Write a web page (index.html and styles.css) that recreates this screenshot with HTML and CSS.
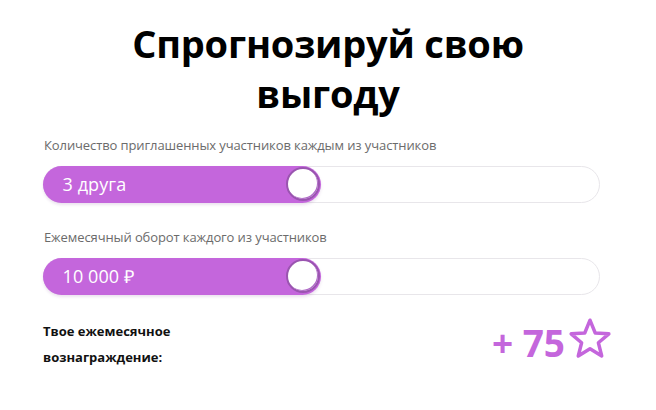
FILE: index.html
```html
<!DOCTYPE html>
<html lang="ru">
<head>
<meta charset="utf-8">
<link rel="stylesheet" href="styles.css">
</head>
<body>
<div class="page">
  <h1 class="title">Спрогнозируй свою<br>выгоду</h1>
  <div class="field">
    <div class="label">Количество приглашенных участников каждым из участников</div>
    <div class="track">
      <div class="fill" style="width: 278px;">
        <span class="value">3 друга</span>
        <span class="knob"></span>
      </div>
    </div>
  </div>
  <div class="field">
    <div class="label">Ежемесячный оборот каждого из участников</div>
    <div class="track">
      <div class="fill" style="width: 278px;">
        <span class="value">10 000 ₽</span>
        <span class="knob"></span>
      </div>
    </div>
  </div>
  <div class="result">
    <div class="result-label">Твое ежемесячное<br>вознаграждение:</div>
    <div class="reward">
      <span class="reward-num">+ 75</span>
      <svg class="star" width="44" height="42" viewBox="0 0 42 40">
        <path d="M21 3 L26 15.2 L39 16 L29 24.5 L32.2 37.2 L21 30.2 L9.8 37.2 L13 24.5 L3 16 L16 15.2 Z" fill="none" stroke="#c466dc" stroke-width="3.3" stroke-linejoin="round"/>
      </svg>
    </div>
  </div>
</div>
</body>
</html>
```

FILE: styles.css
```css
* { box-sizing: border-box; }
html, body { margin: 0; padding: 0; background: #fff; }
body { font-family: "Open Sans", "Noto Sans", sans-serif; }
.page {
  width: 656px;
  height: 410px;
  padding: 18px 56px 0 43px;
}
.title {
  margin: 0 0 0 13px;
  font-size: 38px;
  line-height: 50px;
  font-weight: 700;
  text-align: center;
  color: #000;
  letter-spacing: -0.2px;
}
.field { margin-top: 18px; }
.field + .field { margin-top: 25px; }
.label {
  font-size: 13px;
  line-height: 18px;
  color: #6b6b6b;
  margin-left: 1px;
  letter-spacing: -0.1px;
}
.track {
  margin-top: 12px;
  width: 557px;
  height: 37px;
  border: 1.5px solid #e8e6ea;
  border-radius: 19px;
  position: relative;
}
.fill {
  position: absolute;
  left: -1.5px;
  top: -1.5px;
  height: 37px;
  border-radius: 19px;
  background: #c466dc;
  display: flex;
  align-items: center;
  justify-content: space-between;
  padding: 0 1px 0 20px;
  box-shadow: 0 2px 3px rgba(120, 60, 140, 0.15);
}
.value {
  color: #fff;
  font-family: "Open Sans", sans-serif;
  font-size: 18px;
  font-weight: 400;
  letter-spacing: 0.1px;
}
.knob {
  width: 34px;
  height: 34px;
  border-radius: 50%;
  background: #fff;
  border: 2px solid #9a55b0;
  box-shadow: inset -1px -1px 0 #b06bc8;
}
.result {
  margin-top: 22px;
  display: flex;
  justify-content: space-between;
  align-items: flex-start;
}
.result-label {
  font-size: 13px;
  line-height: 26px;
  font-weight: 700;
  color: #111;
  margin-top: 1px;
}
.reward {
  display: flex;
  align-items: center;
  gap: 3px;
  margin-right: -12px;
  margin-top: -6px;
}
.reward-num {
  font-size: 37px;
  font-weight: 700;
  color: #c466dc;
  line-height: 44px;
  margin-top: 10px;
}
.star { display: block; margin-top: 0; }
```
